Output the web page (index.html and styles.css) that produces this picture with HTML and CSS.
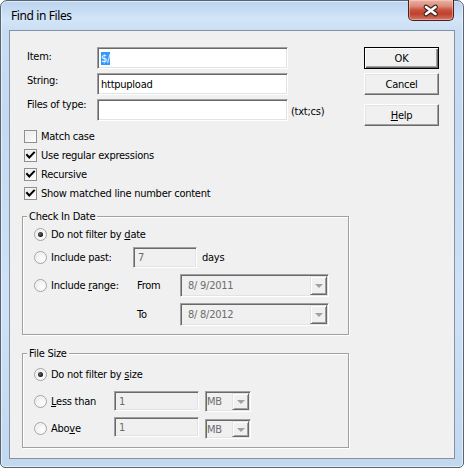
FILE: index.html
```html
<!DOCTYPE html>
<html>
<head>
<meta charset="utf-8">
<link rel="stylesheet" href="styles.css">
</head>
<body>
<div class="window">
  <div class="titlebar">
    <span class="title">Find in Files</span>
    <div class="close">
      <svg width="46" height="21" viewBox="0 0 46 21">
        <path d="M18 8 L27.5 15 M27.5 8 L18 15" stroke="#3a2622" stroke-width="4.8" stroke-linecap="round" fill="none"/>
        <path d="M18 8 L27.5 15 M27.5 8 L18 15" stroke="#ffffff" stroke-width="2.6" stroke-linecap="round" fill="none"/>
      </svg>
    </div>
  </div>
  <div class="client">
    <div class="form">
      <div class="fields">
        <span class="lbl l1">Item:</span>
        <div class="edit"><span class="sel">$/</span></div>
        <span></span>
        <span class="lbl l2">String:</span>
        <div class="edit">httpupload</div>
        <span></span>
        <span class="lbl l3">Files of type:</span>
        <div class="edit"></div>
        <span class="hint">(txt;cs)</span>
      </div>
      <div class="checks">
        <div class="check"><span class="cb"></span><span class="t">Match case</span></div>
        <div class="check"><span class="cb on"><svg width="13" height="13" viewBox="0 0 13 13"><path d="M3 6 L5.3 8.5 L10 3.6" stroke="#000" stroke-width="2" fill="none" stroke-linecap="square"/></svg></span><span class="t">Use regular expressions</span></div>
        <div class="check"><span class="cb on"><svg width="13" height="13" viewBox="0 0 13 13"><path d="M3 6 L5.3 8.5 L10 3.6" stroke="#000" stroke-width="2" fill="none" stroke-linecap="square"/></svg></span><span class="t">Recursive</span></div>
        <div class="check"><span class="cb on"><svg width="13" height="13" viewBox="0 0 13 13"><path d="M3 6 L5.3 8.5 L10 3.6" stroke="#000" stroke-width="2" fill="none" stroke-linecap="square"/></svg></span><span class="t">Show matched line number content</span></div>
      </div>

      <div class="group g1">
        <span class="legend">Check In Date</span>
        <div class="grow r1">
          <div class="rc wide"><span class="radio on"></span><span class="t">Do not filter by <u>d</u>ate</span></div>
        </div>
        <div class="grow r2">
          <div class="rc"><span class="radio"></span><span class="t">Include past:</span></div>
          <div class="edit dis past">7</div>
          <span class="days">days</span>
        </div>
        <div class="grow r3">
          <div class="rc"><span class="radio"></span><span class="t">Include <u>r</u>ange:</span></div>
          <span class="fromlbl">From</span>
          <div class="combo date"><span class="ctext">8/ 9/2011</span><span class="drop"><i class="tri"></i></span></div>
        </div>
        <div class="grow r4">
          <div class="rc"></div>
          <span class="fromlbl">To</span>
          <div class="combo date"><span class="ctext">8/ 8/2012</span><span class="drop"><i class="tri"></i></span></div>
        </div>
      </div>

      <div class="group g2">
        <span class="legend">File Size</span>
        <div class="grow s1">
          <div class="rc wide"><span class="radio on"></span><span class="t">Do not filter by <u>s</u>ize</span></div>
        </div>
        <div class="grow s2">
          <div class="rc small"><span class="radio"></span><span class="t"><u>L</u>ess than</span></div>
          <div class="edit dis size">1</div>
          <div class="combo mb"><span class="ctext">MB</span><span class="drop"><i class="tri"></i></span></div>
        </div>
        <div class="grow s3">
          <div class="rc small"><span class="radio"></span><span class="t">Abo<u>v</u>e</span></div>
          <div class="edit dis size top">1</div>
          <div class="combo mb bottom"><span class="ctext">MB</span><span class="drop"><i class="tri"></i></span></div>
        </div>
      </div>
    </div>

    <div class="buttons">
      <div class="btn default">OK</div>
      <div class="btn cancel">Cancel</div>
      <div class="btn help"><span><u>H</u>elp</span></div>
    </div>
  </div>
</div>
</body>
</html>
```

FILE: styles.css
```css
* { box-sizing: border-box; }
html, body { margin: 0; padding: 0; }
body {
  width: 464px;
  height: 468px;
  overflow: hidden;
  background: #ffffff;
  font-family: "DejaVu Sans Condensed", "Liberation Sans", sans-serif;
  font-size: 11px;
  line-height: 13px;
  letter-spacing: -0.25px;
  color: #000;
}

.window {
  width: 464px;
  height: 468px;
  border: 1px solid #566473;
  border-radius: 7px 7px 5px 5px;
  background: linear-gradient(180deg, #b9d3ee 0px, #d3e5f8 18px, #c9ddf3 30px, #c4daf1 120px, #cfe2f5 300px, #c2d8ef 468px);
  box-shadow: inset 0 0 0 1px rgba(255,255,255,0.55);
  padding: 0 8px 8px 8px;
  display: flex;
  flex-direction: column;
}

.titlebar {
  height: 29px;
  display: flex;
  align-items: flex-start;
  flex-shrink: 0;
}
.title {
  font-family: "Noto Sans", "Open Sans", sans-serif;
  font-size: 12px;
  line-height: 16px;
  letter-spacing: -0.4px;
  margin: 7px 0 0 2px;
  color: #000;
}
.close {
  margin: -1px 1px 0 auto;
  width: 46px;
  height: 21px;
  border: 1px solid #4e2019;
  border-top: none;
  border-radius: 0 0 5px 5px;
  background: linear-gradient(180deg, #eab2a4 0px, #dd8e7e 6px, #c9513d 10px, #c0412c 14px, #d17a69 20px);
  box-shadow: inset 0 0 0 1px rgba(255,220,210,0.45);
}
.close svg { display: block; margin: -1px 0 0 -1px; }

.client {
  flex: 1;
  border: 1px solid #8393a7;
  background: #f0f0f0;
  display: flex;
  padding: 16px 0 0 12px;
  gap: 15px;
}

.form {
  width: 327px;
  display: flex;
  flex-direction: column;
}

.fields {
  display: grid;
  grid-template-columns: 70px 191px auto;
  grid-auto-rows: 22px;
  row-gap: 4px;
  margin-left: 5px;
}
.lbl { align-self: start; white-space: nowrap; }
.l1 { margin-top: 3px; }
.l2 { margin-top: 1px; }
.l3 { margin-top: -1px; }
.hint { align-self: center; margin: 2px 0 0 3px; white-space: nowrap; }

.edit {
  height: 22px;
  border: 1px solid;
  border-color: #a0a0a0 #ffffff #ffffff #a0a0a0;
  box-shadow: inset 1px 1px 0 #696969, inset -1px -1px 0 #e3e3e3;
  background: #ffffff;
  padding: 0 3px;
  display: flex;
  align-items: center;
  white-space: pre;
}
.sel { background: #3399ff; color: #fff; }
.edit.dis { background: #f0f0f0; color: #6d6d6d; padding-left: 4px; }

.t { white-space: nowrap; }

.checks { margin: 6px 0 0 2px; display: flex; flex-direction: column; }
.check { height: 19px; display: flex; align-items: center; gap: 4px; }
.cb {
  width: 13px;
  height: 13px;
  border: 1px solid #8e8f8f;
  background: linear-gradient(135deg, #e8e8e8, #ffffff);
  box-shadow: inset 1px 1px 0 #f4f4f4;
  flex-shrink: 0;
}
.cb svg { display: block; margin: -1px 0 0 -1px; }

.group {
  border: 1px solid #a0a0a0;
  box-shadow: 1px 1px 0 #ffffff, inset 1px 1px 0 #ffffff;
  display: flex;
  flex-direction: column;
  padding-bottom: 8px;
}
.g1 { margin-top: 13px; }
.g2 { margin-top: 18px; }
.legend {
  align-self: flex-start;
  margin: -7px 0 0 4px;
  padding: 0 2px;
  background: #f0f0f0;
  line-height: 13px;
  height: 13px;
  white-space: nowrap;
}

.grow { display: flex; align-items: center; }
.r1 { height: 22px; }
.r2 { height: 21px; margin-top: 2px; }
.r3 { height: 23px; margin-top: 6px; }
.r4 { height: 23px; margin-top: 6px; }
.s1 { height: 22px; margin-top: 3px; }
.s2 { height: 21px; margin-top: 6px; align-items: flex-start; }
.s3 { height: 22px; margin-top: 5px; align-items: flex-start; }

.rc {
  width: 110px;
  height: 100%;
  padding-left: 11px;
  display: flex;
  align-items: center;
  gap: 4px;
  flex-shrink: 0;
}
.rc.wide { width: auto; }
.rc.small { width: 91px; }

.radio {
  width: 13px;
  height: 13px;
  border-radius: 50%;
  border: 1px solid #a3a5a5;
  background: radial-gradient(circle at 65% 65%, #ffffff 0%, #f4f4f4 45%, #dcdcdc 100%);
  box-shadow: inset 0 0 0 1px #f8f8f8;
  flex-shrink: 0;
  display: flex;
  align-items: center;
  justify-content: center;
}
.radio.on::after {
  content: "";
  width: 5px;
  height: 5px;
  border-radius: 50%;
  background: radial-gradient(circle at 40% 40%, #6a6a6a 0%, #111 70%);
}

.past { width: 64px; height: 21px; }
.days { margin-left: 5px; }
.fromlbl { width: 47px; padding-left: 4px; flex-shrink: 0; }

.combo {
  display: flex;
  align-items: stretch;
  border: 1px solid;
  border-color: #a0a0a0 #ffffff #ffffff #a0a0a0;
  box-shadow: inset 1px 1px 0 #696969, inset -1px -1px 0 #e3e3e3;
  background: #f0f0f0;
  color: #6d6d6d;
  padding: 2px;
}
.ctext { display: flex; align-items: center; white-space: pre; flex: 1; }
.date { width: 149px; height: 23px; }
.date .ctext { padding-left: 5px; }
.mb { width: 46px; height: 21px; margin-left: 6px; padding-left: 1px; }
.bottom { align-self: flex-end; height: 20px; }
.size { width: 85px; height: 20px; }
.top { align-self: flex-start; }

.drop {
  width: 17px;
  margin: -1px -1px -1px 0;
  border: 1px solid;
  border-color: #e3e3e3 #696969 #696969 #e3e3e3;
  box-shadow: inset 1px 1px 0 #ffffff, inset -1px -1px 0 #a0a0a0;
  background: #f0f0f0;
  display: flex;
  align-items: center;
  justify-content: center;
}
.tri {
  width: 0;
  height: 0;
  border-left: 4px solid transparent;
  border-right: 4px solid transparent;
  border-top: 4px solid #a0a0a0;
  margin-top: 1px;
}

.buttons {
  width: 75px;
  display: flex;
  flex-direction: column;
}
.btn {
  height: 22px;
  display: flex;
  align-items: center;
  justify-content: center;
  border: 1px solid;
  border-color: #ffffff #696969 #696969 #ffffff;
  box-shadow: inset -1px -1px 0 #a0a0a0, inset 1px 1px 0 #e3e3e3;
  background: #f0f0f0;
}
.btn.default {
  border: 1px solid #000;
  box-shadow: inset 1px 1px 0 #ffffff, inset -1px -1px 0 #696969, inset -2px -2px 0 #a0a0a0;
}
.cancel { margin-top: 4px; }
.help { margin-top: 9px; }
```
